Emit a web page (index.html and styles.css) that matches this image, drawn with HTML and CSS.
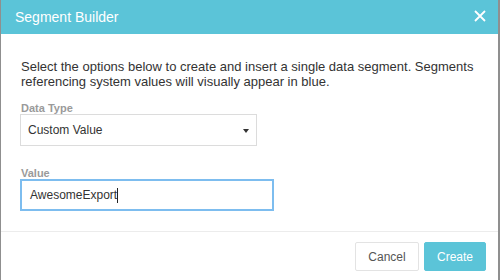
FILE: index.html
```html
<!DOCTYPE html>
<html>
<head>
<meta charset="utf-8">
<link rel="stylesheet" href="styles.css">
</head>
<body>
<div class="modal">
  <div class="header">
    <span class="title">Segment Builder</span>
    <svg class="close" width="12" height="12" viewBox="0 0 12 12"><path d="M1 1 L11 11 M11 1 L1 11" stroke="#fff" stroke-width="1.8" fill="none"/></svg>
  </div>
  <div class="body">
    <p class="intro">Select the options below to create and insert a single data segment. Segments referencing system values will visually appear in blue.</p>
    <div class="field">
      <div class="label">Data Type</div>
      <div class="select"><span>Custom Value</span><span class="caret"></span></div>
    </div>
    <div class="field">
      <div class="label">Value</div>
      <div class="input"><span>AwesomeExport</span><span class="cursor"></span></div>
    </div>
  </div>
  <div class="footer">
    <button class="btn btn-cancel">Cancel</button>
    <button class="btn btn-create">Create</button>
  </div>
</div>
</body>
</html>
```
FILE: styles.css
```css
html, body {
  margin: 0;
  padding: 0;
  width: 500px;
  height: 280px;
  overflow: hidden;
  background: #fff;
  font-family: "Liberation Sans", Arial, sans-serif;
}
.modal {
  box-sizing: border-box;
  width: 500px;
  height: 280px;
  border-left: 1px solid #8f8f8f;
  border-right: 2px solid #8f8f8f;
  display: flex;
  flex-direction: column;
}
.header {
  height: 34px;
  background: #5bc4d8;
  display: flex;
  align-items: center;
  justify-content: space-between;
  padding: 0 12px 0 14px;
  flex: none;
}
.title {
  color: #fff;
  font-size: 14px;
  line-height: 16px;
  margin-top: -1px;
}
.close {
  display: block;
  margin-top: -2px;
}
.body {
  padding: 25px 19px 0 19px;
  height: 198px;
  box-sizing: border-box;
  border-bottom: 1px solid #ececec;
  flex: none;
}
.intro {
  margin: 0 0 13px 0;
  font-size: 13px;
  line-height: 15px;
  color: #333;
  padding-left: 1px;
}
.field {
  margin-bottom: 21px;
}
.label {
  font-size: 11px;
  line-height: 12px;
  font-weight: bold;
  color: #9a9a9a;
  padding-left: 1px;
}
.select {
  box-sizing: border-box;
  width: 237px;
  height: 32px;
  border: 1px solid #dcdcdc;
  display: flex;
  align-items: center;
  justify-content: space-between;
  padding: 0 7px 0 7px;
  font-size: 12px;
  color: #333;
}
.caret {
  width: 0;
  height: 0;
  border-left: 3.5px solid transparent;
  border-right: 3.5px solid transparent;
  border-top: 4px solid #333;
  margin-top: 1px;
}
.input {
  box-sizing: border-box;
  width: 254px;
  height: 32px;
  border: 2px solid #7dbdef;
  display: flex;
  align-items: center;
  padding: 0 0 0 8px;
  font-size: 12px;
  color: #333;
}
.cursor {
  display: block;
  width: 1px;
  height: 15px;
  background: #222;
}
.footer {
  display: flex;
  justify-content: flex-end;
  gap: 5px;
  padding: 10px 12px 0 0;
}
.btn {
  height: 29px;
  font-family: "Liberation Sans", Arial, sans-serif;
  font-size: 12px;
  border-radius: 2px;
  padding: 0;
  margin: 0;
}
.btn-cancel {
  width: 64px;
  background: #fff;
  border: 1px solid #e3e3e3;
  color: #555;
}
.btn-create {
  width: 62px;
  background: #5bc4d8;
  border: 1px solid #5bc4d8;
  color: #fff;
}
```
